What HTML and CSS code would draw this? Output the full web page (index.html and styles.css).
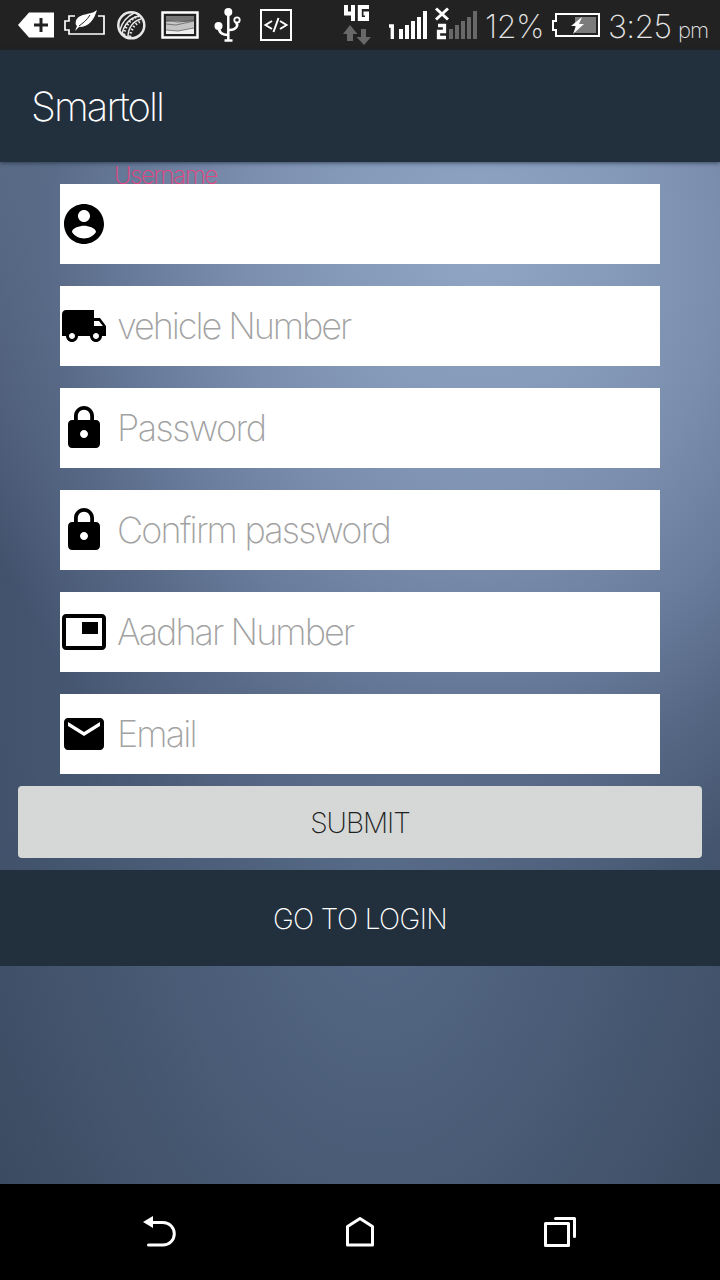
FILE: index.html
```html
<!DOCTYPE html>
<html lang="en">
<head>
<meta charset="utf-8">
<title>Smartoll</title>
<link rel="stylesheet" href="styles.css">
</head>
<body>
<div class="screen">
  <header class="status">
    <svg class="status-icons" width="480" height="50" viewBox="0 0 480 50">
      <path d="M18 25l11-12.500h25v25H29z" fill="#fff"/>
      <path d="M41 18v14M34 25h14" stroke="#222" stroke-width="3"/>
      <g fill="none" stroke="#fff" stroke-width="1.700">
        <path d="M75 16h-6v5h-4v9h4v4h35V16h-6"/>
      </g>
      <path d="M97 10c-5 5-19 3-21 11-1 3 0 4 1 5l-2 5 4-4c10 0 15-7 18-17z" fill="#fff"/>
      <path d="M79 26c4-3 8-6 11-11" fill="none" stroke="#222" stroke-width="1"/>
      <g fill="none" stroke="#e8e8e8">
        <circle cx="131.300" cy="25.300" r="13" stroke-width="2.500"/>
        <path d="M120 30c2-8 6-13 14-17M122 34c2-9 8-16 17-18M128 37c0-9 5-16 13-18" stroke-width="1.500"/>
        <path d="M124 35c1-9 7-17 15-19M130 37c1-8 5-14 12-16" stroke-width="2.500" stroke-dasharray="1.500 2"/>
      </g>
      <rect x="162.500" y="12.500" width="35" height="25" fill="#222" stroke="#fff" stroke-width="2.500"/>
      <rect x="166" y="16" width="28" height="18" fill="#c4c4c4"/>
      <path d="M166 16h28v5l-9 1-10-1-9 1z" fill="#777"/>
      <path d="M166 30l12 1 16-3v6h-28z" fill="#eee"/>
      <path d="M166 20l12 2 16-2M166 24l10 1 18-4M166 30l12 1 16-3" fill="none" stroke="#555" stroke-width=".7"/>
      <g fill="none" stroke="#fff" stroke-width="2.500">
        <path d="M228.300 12v28M218.500 26c0 6 3 9 9.500 9M236 22.500c3 3 0 8-7.500 7.500M224.500 40.500h8"/>
        <circle cx="237" cy="20" r="2.700" stroke-width="1.800"/>
      </g>
      <circle cx="228.300" cy="12" r="4" fill="#fff"/><circle cx="218.500" cy="26" r="4" fill="#fff"/>
      <g fill="none" stroke="#fff" stroke-width="2">
        <rect x="261" y="10" width="30" height="30"/>
        <path d="M272 21l-6.500 4 6.500 4M280 21l6.500 4-6.500 4M278.500 18l-5 14"/>
      </g>
      <g fill="none" stroke="#fff" stroke-width="4">
        <path d="M346 5v8.500h8M353 5v16M369 7h-9.200v12h7.200v-5.500h-3.500"/>
      </g>
      <path d="M350 25l7.500 9H353v7h-6v-7h-4zM364 45l-7.500-8h4.500v-8h5v8h5z" fill="#686868"/>
      <path d="M389 26h3.300v13M438 25.500h6.500v6H438.500v6h7.500" fill="none" stroke="#fff" stroke-width="3.300"/>
      <path d="M399 29h4v10h-4zM405 25h4v14h-4zM411 21h4v18h-4zM417 17h4v22h-4zM423 11h4v28h-4z" fill="#fff"/>
      <path d="M449 29h4v10h-4zM455 25h4v14h-4zM461 21h4v18h-4zM467 17h4v22h-4zM473 11h4v28h-4z" fill="#686868"/>
      <path d="M436 8.500l12 11M448 8.500l-12 11" stroke="#fff" stroke-width="3"/>
    </svg>
    <span class="percent">12%</span>
    <svg class="battery" width="50" height="28" viewBox="0 0 50 28">
      <path d="M4 3h44v22H5v-6H2v-9h3v-7" fill="none" stroke="#fff" stroke-width="2"/>
      <path d="M24 6h21v16H24z" fill="#7b7b7b"/>
      <path d="M31 6l-11 9h5l-3 8 11-10h-5z" fill="#fff"/>
    </svg>
    <span class="clock">3:25</span><span class="ampm">pm</span>
  </header>
  <div class="appbar"><h1 class="title">Smartoll</h1></div>
  <main class="content">
    <div class="floating"><span class="floating-label">Username</span></div>
    <form class="fields">
      <div class="field"><svg class="icon" viewBox="0 0 24 24"><path d="M12 2C6.480 2 2 6.480 2 12s4.480 10 10 10 10-4.480 10-10S17.520 2 12 2zm0 3c1.660 0 3 1.340 3 3s-1.340 3-3 3-3-1.340-3-3 1.340-3 3-3zm0 14.200c-2.500 0-4.710-1.280-6-3.220.03-1.990 4-3.080 6-3.080 1.990 0 5.970 1.090 6 3.080-1.290 1.940-3.500 3.220-6 3.220z"/></svg></div>
      <div class="field"><svg class="icon" viewBox="0 0 24 24"><path d="M20 8h-3V4H3c-1.100 0-2 .9-2 2v11h2c0 1.660 1.340 3 3 3s3-1.340 3-3h6c0 1.660 1.340 3 3 3s3-1.340 3-3h2v-5l-3-4zM6 18.500c-.83 0-1.500-.67-1.500-1.500s.67-1.500 1.500-1.500 1.500.67 1.500 1.500-.67 1.500-1.500 1.500zm13.500-9l1.960 2.500H17V9.500h2.500zm-1.500 9c-.83 0-1.500-.67-1.500-1.500s.67-1.500 1.500-1.500 1.500.67 1.500 1.500-.67 1.500-1.500 1.500z"/></svg><span class="hint vehicle">vehicle Number</span></div>
      <div class="field"><svg class="icon" viewBox="0 0 24 24"><path d="M18 8h-1V6c0-2.760-2.240-5-5-5S7 3.240 7 6v2H6c-1.100 0-2 .9-2 2v10c0 1.100.9 2 2 2h12c1.100 0 2-.9 2-2V10c0-1.100-.9-2-2-2zm-6 9c-1.100 0-2-.9-2-2s.9-2 2-2 2 .9 2 2-.9 2-2 2zm3.100-9H8.900V6c0-1.710 1.390-3.100 3.100-3.100 1.710 0 3.100 1.390 3.100 3.100v2z"/></svg><span class="hint password">Password</span></div>
      <div class="field"><svg class="icon" viewBox="0 0 24 24"><path d="M18 8h-1V6c0-2.760-2.240-5-5-5S7 3.240 7 6v2H6c-1.100 0-2 .9-2 2v10c0 1.100.9 2 2 2h12c1.100 0 2-.9 2-2V10c0-1.100-.9-2-2-2zm-6 9c-1.100 0-2-.9-2-2s.9-2 2-2 2 .9 2 2-.9 2-2 2zm3.100-9H8.900V6c0-1.710 1.390-3.100 3.100-3.100 1.710 0 3.100 1.390 3.100 3.100v2z"/></svg><span class="hint confirm">Confirm password</span></div>
      <div class="field"><svg class="icon" viewBox="0 0 24 24"><path d="M19 7h-8v6h8V7zm2-4H3c-1.100 0-2 .9-2 2v14c0 1.100.9 1.980 2 1.980h18c1.100 0 2-.88 2-1.980V5c0-1.100-.9-2-2-2zm0 16.010H3V4.980h18v14.030z"/></svg><span class="hint aadhar">Aadhar Number</span></div>
      <div class="field"><svg class="icon" viewBox="0 0 24 24"><path d="M20 4H4c-1.100 0-2 .9-2 2v12c0 1.100.9 2 2 2h16c1.100 0 2-.9 2-2V6c0-1.100-.9-2-2-2zm0 4l-8 5-8-5V6l8 5 8-5v2z"/></svg><span class="hint email">Email</span></div>
    </form>
    <button class="submit"><span class="submit-text">SUBMIT</span></button>
    <button class="login"><span class="login-text">GO TO LOGIN</span></button>
  </main>
  <nav class="navbar">
    <svg class="nav-icon" viewBox="0 0 48 48"><path d="M15 14.500h12a11.300 11.300 0 0 1 0 22.600H12.500" fill="none" stroke="#fff" stroke-width="3" stroke-linecap="round"/><path d="M7 14l10-6v12z" fill="#fff"/></svg>
    <svg class="nav-icon" viewBox="0 0 48 48"><path d="M11.500 18.500L24 10.500l12.500 8v18.500h-25z" fill="none" stroke="#fff" stroke-width="3" stroke-linejoin="round"/></svg>
    <svg class="nav-icon" viewBox="0 0 48 48"><path d="M9.500 15.500h23v22h-23zM19.500 10.500h19v18" fill="none" stroke="#fff" stroke-width="3" stroke-linejoin="round" stroke-linecap="round"/></svg>
  </nav>
</div>
</body>
</html>
```
FILE: styles.css
```css
* { box-sizing: border-box; }
body { margin: 0; font-family: Inter, Roboto, "Liberation Sans", sans-serif; font-weight: 200; }
.screen { width: 720px; height: 1280px; display: flex; flex-direction: column; overflow: hidden; }
.status { height: 50px; background: #222; color: #e4e4e4; display: flex; align-items: center; white-space: nowrap; }
.status-icons { flex: none; }
.percent { width: 71px; padding-left: 5px; padding-top: 3px; font-size: 32px; letter-spacing: -0.4px; }
.battery { flex: none; }
.clock { width: 77px; padding-left: 7px; padding-top: 3px; font-size: 32px; letter-spacing: -0.7px; }
.ampm { padding-top: 9px; font-size: 22px; letter-spacing: -1px; }
.appbar { height: 112px; flex: none; background: #222f3d; padding: 1px 31px 0; display: flex; align-items: center; box-shadow: 0 1px 4px #1c2a3bb0; z-index: 1; }
.title { margin: 0; font-size: 40px; font-weight: 200; letter-spacing: -1.9px; color: #fff; }
.content {
  flex: 1;
  display: flex;
  flex-direction: column;
  background:
    radial-gradient(ellipse 540px 660px at 480px 90px, #90a4c4 0%, #8498b8 28%, #7b8eae 44%, #687b9b 64%, #5b6d8ac0 80%, #50628000 100%),
    radial-gradient(ellipse 420px 700px at 380px 700px, #566a87 0%, #56698500 100%),
    linear-gradient(180deg, #566782 0%, #42526d 40%, #3b4b61 100%);
}
.floating { height: 22px; flex: none; padding-left: 114px; overflow: hidden; }
.floating-label { display: block; font-size: 24px; line-height: 28px; letter-spacing: -1.3px; color: #e64480; }
.fields { display: flex; flex-direction: column; gap: 22px; padding: 0 60px; }
.field { height: 80px; background: #fff; display: flex; align-items: center; gap: 9px; }
.icon { width: 48px; height: 48px; flex: none; fill: #000; }
.hint { font-size: 36px; line-height: 48px; color: #a2a2a2; white-space: nowrap; }
.vehicle { letter-spacing: -2.05px; }
.password { letter-spacing: -1.5px; }
.confirm { letter-spacing: -1.8px; }
.aadhar { letter-spacing: -1.95px; }
.email { letter-spacing: -1.9px; }
.submit, .login { border: 0; padding: 0; font: inherit; display: flex; align-items: center; justify-content: center; }
.submit { height: 72px; margin: 12px 18px; border-radius: 4px; background: #d6d8d7; color: #1d2222; font-size: 28px; letter-spacing: -1px; padding-top: 2px; }
.login { height: 96px; background: #222f3d; color: #fff; font-size: 28px; letter-spacing: -0.6px; padding-top: 2px; }
.navbar { height: 96px; flex: none; background: #000; display: flex; align-items: center; justify-content: space-between; padding: 0 136px; }
.nav-icon { width: 48px; height: 48px; }
```
